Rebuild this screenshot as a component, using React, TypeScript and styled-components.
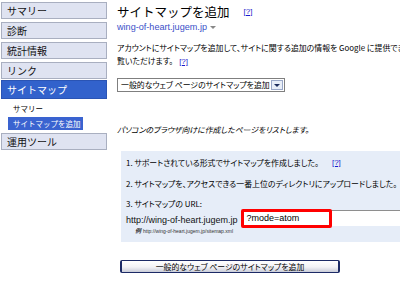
import React, { FC } from 'react';
import styled, { createGlobalStyle } from 'styled-components';

const GlobalStyle = createGlobalStyle`
	html, body {
		margin: 0;
		padding: 0;
		width: 400px;
		height: 283px;
		overflow: hidden;
		background: #ffffff;
	}
	body {
		font-family: 'Noto Sans CJK JP', 'Liberation Sans', sans-serif;
		color: #000;
	}
`;

const jp = `'Noto Sans CJK JP', 'Liberation Sans', sans-serif`;
const latin = `'Liberation Sans', 'Noto Sans CJK JP', sans-serif`;

const Page = styled.div`
	display: flex;
	width: 400px;
	height: 283px;
	overflow: hidden;
`;

const Sidebar = styled.nav`
	flex: 0 0 106px;
	display: flex;
	flex-direction: column;
	padding: 2px 0 0 1px;
	gap: 3px;
`;

const NavItem = styled.div<{ $active?: boolean }>`
	height: ${({ $active }) => ($active ? '17px' : '15px')};
	margin-top: ${({ $active }) => ($active ? '-2px' : '0')};
	padding-left: 5px;
	display: flex;
	align-items: center;
	font-family: ${jp};
	font-size: 10px;
	line-height: 1;
	color: ${({ $active }) => ($active ? '#ffffff' : '#111111')};
	background: ${({ $active }) => ($active ? '#3262cc' : '#dfe3f1')};
	border: 1px solid ${({ $active }) => ($active ? '#2a54b4' : '#a9afc0')};
`;

const SubNav = styled.div`
	display: flex;
	flex-direction: column;
	padding: 0 0 0 7px;
	gap: 2px;
`;

const SubItem = styled.div<{ $selected?: boolean }>`
	width: 70px;
	height: 13px;
	padding-left: 5px;
	display: flex;
	align-items: center;
	font-family: ${jp};
	font-size: 7.5px;
	line-height: 1;
	color: ${({ $selected }) => ($selected ? '#ffffff' : '#000000')};
	background: ${({ $selected }) => ($selected ? '#3a63d0' : 'transparent')};
`;

const Main = styled.main`
	flex: 1;
	min-width: 0;
	padding-left: 10px;
	display: flex;
	flex-direction: column;
	align-items: flex-start;
	overflow: hidden;
	white-space: nowrap;
`;

const TitleRow = styled.div`
	display: flex;
	align-items: center;
	height: 20px;
	padding-top: 1px;
`;

const Title = styled.h1`
	margin: 0;
	font-family: ${jp};
	font-weight: normal;
	font-size: 12.5px;
	line-height: 17px;
`;

const Help = styled.a<{ $gap?: number }>`
	margin-left: ${({ $gap }) => $gap ?? 4}px;
	font-family: ${latin};
	font-size: 8px;
	color: #1a1acc;
	text-decoration: underline;
`;

const Site = styled.div`
	display: flex;
	align-items: center;
	gap: 3px;
	height: 12px;
	font-family: ${latin};
	font-size: 9.1px;
	color: #3b4fc8;
`;

const Caret = styled.span`
	width: 0;
	height: 0;
	border-left: 3px solid transparent;
	border-right: 3px solid transparent;
	border-top: 3px solid #888;
	margin-top: 1px;
`;

const BodyText = styled.p`
	margin: 0;
	font-family: ${jp};
	font-size: 7.9px;
	font-feature-settings: 'palt';
`;

const Intro = styled(BodyText)`
	margin-top: 8px;
	line-height: 13px;
`;

const Select = styled.div`
	margin-top: 10px;
	display: flex;
	align-items: stretch;
	width: 166px;
	height: 12px;
	border: 1px solid #7f7f7f;
	background: #fff;
`;

const SelectText = styled.span`
	flex: 1;
	padding-left: 3px;
	font-family: ${jp};
	font-size: 7.9px;
	font-feature-settings: 'palt';
	line-height: 12px;
`;

const SelectArrow = styled.span`
	flex: 0 0 10px;
	display: flex;
	align-items: center;
	justify-content: center;
	margin: 1px;
	background: #e8eef8;
	border: 1px solid #9aa8c8;
	&::after {
		content: '';
		border-left: 3px solid transparent;
		border-right: 3px solid transparent;
		border-top: 3px solid #1c2c5c;
	}
`;

const Note = styled(BodyText)`
	margin-top: 33px;
	font-style: italic;
	line-height: 10px;
`;

const StepsBox = styled.section`
	margin: 16px 0 0 4px;
	padding: 7px 0 7px 5px;
	width: 300px;
	background: #e6edf8;
	display: flex;
	flex-direction: column;
`;

const Step = styled(BodyText)<{ $gap?: number }>`
	margin-top: ${({ $gap }) => $gap ?? 0}px;
	display: flex;
	align-items: center;
	line-height: 10px;
`;

const UrlRow = styled.div`
	display: flex;
	align-items: center;
	height: 17px;
`;

const UrlPrefix = styled.span`
	font-family: ${latin};
	font-size: 9px;
	color: #111;
	margin-top: 4px;
`;

const InputWrap = styled.div`
	position: relative;
	flex: 1;
	margin-left: 4px;
	height: 16px;
`;

const UrlInput = styled.div`
	height: 15px;
	padding-left: 4px;
	display: flex;
	align-items: center;
	background: #fff;
	border-top: 1px solid #8e8e8e;
	border-left: 1px solid #8e8e8e;
	font-family: ${latin};
	font-size: 9px;
`;

const Highlight = styled.span`
	position: absolute;
	left: -1px;
	top: -1px;
	width: 85px;
	height: 13px;
	border: 3px solid #ff0000;
	border-radius: 2px;
`;

const Example = styled.div`
	margin: 1px 0 0 9px;
	font-family: ${latin};
	font-size: 5px;
	line-height: 7px;
	color: #333;
`;

const ExampleMark = styled.span`
	font-family: ${jp};
	font-style: italic;
	font-weight: bold;
	font-size: 6px;
	margin-right: 2px;
`;

const SubmitButton = styled.button`
	margin: 18px 0 0 3px;
	width: 220px;
	height: 13px;
	padding: 0;
	display: flex;
	align-items: center;
	justify-content: center;
	font-family: ${jp};
	font-size: 7.9px;
	font-feature-settings: 'palt';
	line-height: 1;
	color: #000;
	background: linear-gradient(#ffffff 0%, #f2f2f6 55%, #c9ccd8 100%);
	border: 1px solid #1c2a66;
	border-left-width: 2px;
	border-right-width: 2px;
	border-radius: 2px;
`;

const NAV_TOP = ['サマリー', '診断', '統計情報', 'リンク'];

const App: FC = () => (
	<>
		<GlobalStyle />
		<Page>
			<Sidebar>
				{NAV_TOP.map((label) => (
					<NavItem key={label}>{label}</NavItem>
				))}
				<NavItem $active>サイトマップ</NavItem>
				<SubNav>
					<SubItem>サマリー</SubItem>
					<SubItem $selected>サイトマップを追加</SubItem>
				</SubNav>
				<NavItem>運用ツール</NavItem>
			</Sidebar>
			<Main>
				<TitleRow>
					<Title>サイトマップを追加</Title>
					<Help $gap={14}>[?]</Help>
				</TitleRow>
				<Site>
					wing-of-heart.jugem.jp
					<Caret />
				</Site>
				<Intro>
					アカウントにサイトマップを追加して、サイトに関する追加の情報を Google に提供できます。
					<br />
					覧いただけます。
					<Help $gap={6}>[?]</Help>
				</Intro>
				<Select>
					<SelectText>一般的なウェブ ページのサイトマップを追加</SelectText>
					<SelectArrow />
				</Select>
				<Note>パソコンのブラウザ向けに作成したページをリストします。</Note>
				<StepsBox>
					<Step>
						1. サポートされている形式でサイトマップを作成しました。
						<Help $gap={13}>[?]</Help>
					</Step>
					<Step $gap={11}>2. サイトマップを、アクセスできる一番上位のディレクトリにアップロードしました。</Step>
					<Step $gap={10}>3. サイトマップの URL:</Step>
					<UrlRow>
						<UrlPrefix>http://wing-of-heart.jugem.jp</UrlPrefix>
						<InputWrap>
							<UrlInput>?mode=atom</UrlInput>
							<Highlight />
						</InputWrap>
					</UrlRow>
					<Example>
						<ExampleMark>例</ExampleMark>
						http://wing-of-heart.jugem.jp/sitemap.xml
					</Example>
				</StepsBox>
				<SubmitButton>一般的なウェブ ページのサイトマップを追加</SubmitButton>
			</Main>
		</Page>
	</>
);

export default App;
